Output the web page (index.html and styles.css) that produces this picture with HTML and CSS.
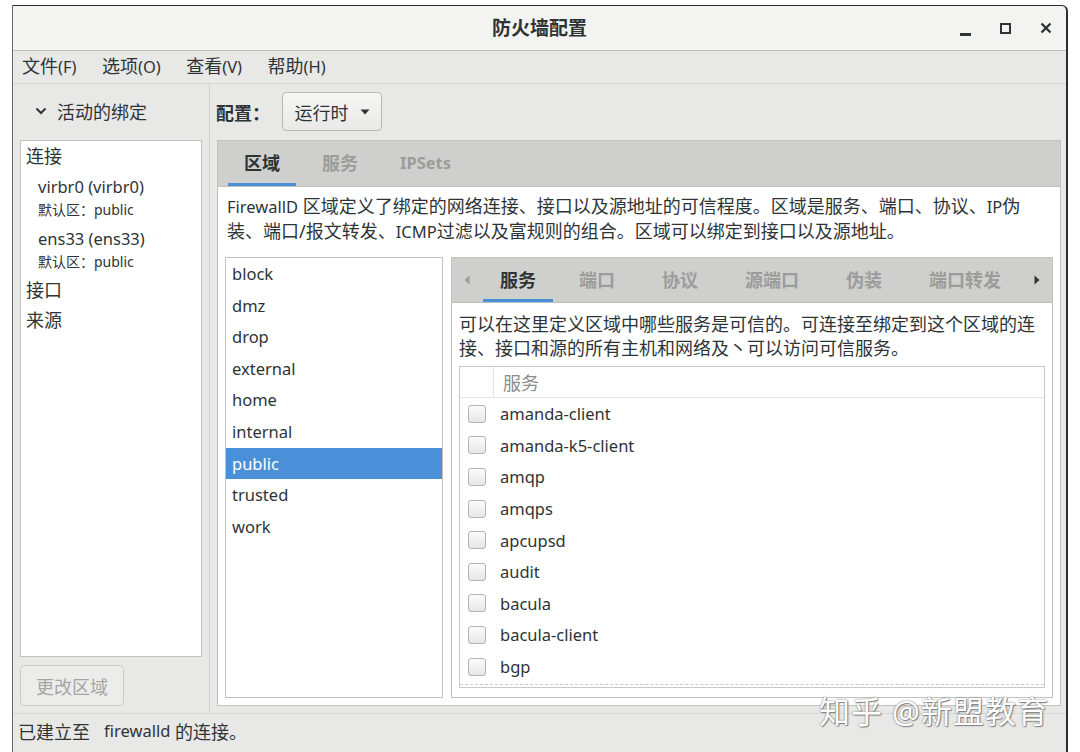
FILE: index.html
```html
<!DOCTYPE html>
<html lang="zh-CN">
<head>
    <meta charset="UTF-8">
    <title>防火墙配置</title>
    <link rel="stylesheet" href="styles.css">
</head>
<body>
    <div class="window">
        <div class="titlebar">
            <span class="title">防火墙配置</span>
            <div class="controls">
                <span class="ctl-min"></span>
                <span class="ctl-max"></span>
                <svg width="12" height="12" viewBox="0 0 12 12"><path d="M1.5 1.5 L10.5 10.5 M10.5 1.5 L1.5 10.5" stroke="#2e3436" stroke-width="2.4"/></svg>
            </div>
        </div>

        <div class="menubar">
            <span>文件<span class="en">(F)</span></span>
            <span>选项<span class="en">(O)</span></span>
            <span>查看<span class="en">(V)</span></span>
            <span>帮助<span class="en">(H)</span></span>
        </div>

        <div class="main">
            <div class="sidebar">
                <div class="side-head">
                    <svg width="12" height="8" viewBox="0 0 12 8"><path d="M1.5 1.5 L6 6 L10.5 1.5" fill="none" stroke="#2e3436" stroke-width="2"/></svg>
                    <span>活动的绑定</span>
                </div>
                <div class="bindings">
                    <div class="bind-group">连接</div>
                    <div class="bind-item">virbr0 (virbr0)</div>
                    <div class="bind-zone">默认区：public</div>
                    <div class="bind-item second">ens33 (ens33)</div>
                    <div class="bind-zone">默认区：public</div>
                    <div class="bind-group gap">接口</div>
                    <div class="bind-group">来源</div>
                </div>
                <div class="btn btn-disabled">更改区域</div>
            </div>

            <div class="content">
                <div class="config-row">
                    <span class="config-label">配置：</span>
                    <div class="btn combo">运行时
                        <svg width="10" height="6" viewBox="0 0 10 6"><path d="M0.5 0.5 L9.5 0.5 L5 5.5 Z" fill="#2e3436"/></svg>
                    </div>
                </div>

                <div class="notebook">
                    <div class="tabs">
                        <span class="tab active">区域</span>
                        <span class="tab">服务</span>
                        <span class="tab en-tab">IPSets</span>
                    </div>
                    <div class="page">
                        <p class="desc outer-desc"><span class="en">FirewallD</span> 区域定义了绑定的网络连接、接口以及源地址的可信程度。区域是服务、端口、协议、<span class="en">IP</span>伪<br>装、端口/报文转发、<span class="en">ICMP</span>过滤以及富规则的组合。区域可以绑定到接口以及源地址。</p>
                        <div class="zone-area">
                            <ul class="zones">
                                <li>block</li>
                                <li>dmz</li>
                                <li>drop</li>
                                <li>external</li>
                                <li>home</li>
                                <li>internal</li>
                                <li class="selected">public</li>
                                <li>trusted</li>
                                <li>work</li>
                            </ul>

                            <div class="inner-notebook">
                                <div class="inner-tabs">
                                    <svg class="arrow" width="6" height="10" viewBox="0 0 6 10"><path d="M5.5 0.5 L5.5 9.5 L0.5 5 Z" fill="#9a9a9a"/></svg>
                                    <span class="itab active">服务</span>
                                    <span class="itab">端口</span>
                                    <span class="itab">协议</span>
                                    <span class="itab">源端口</span>
                                    <span class="itab">伪装</span>
                                    <span class="itab">端口转发</span>
                                    <svg class="arrow arrow-r" width="6" height="10" viewBox="0 0 6 10"><path d="M0.5 0.5 L0.5 9.5 L5.5 5 Z" fill="#2e3436"/></svg>
                                </div>
                                <div class="inner-page">
                                    <p class="desc inner-desc">可以在这里定义区域中哪些服务是可信的。可连接至绑定到这个区域的连接、接口和源的所有主机和网络及丶可以访问可信服务。</p>
                                    <div class="tree">
                                        <div class="tree-head">
                                            <span class="col-check"></span>
                                            <span class="col-name">服务</span>
                                        </div>
                                        <div class="tree-body">
                                            <div class="row"><span class="check"></span>amanda-client</div>
                                            <div class="row"><span class="check"></span>amanda-k5-client</div>
                                            <div class="row"><span class="check"></span>amqp</div>
                                            <div class="row"><span class="check"></span>amqps</div>
                                            <div class="row"><span class="check"></span>apcupsd</div>
                                            <div class="row"><span class="check"></span>audit</div>
                                            <div class="row"><span class="check"></span>bacula</div>
                                            <div class="row"><span class="check"></span>bacula-client</div>
                                            <div class="row"><span class="check"></span>bgp</div>
                                        </div>
                                    </div>
                                </div>
                            </div>
                        </div>
                    </div>
                </div>
            </div>
        </div>

        <div class="statusbar">已建立至&nbsp;&nbsp; <span class="en">firewalld</span>&nbsp;的连接。</div>

        <div class="watermark">知乎 @新盟教育</div>
    </div>
</body>
</html>
```

FILE: styles.css
```css
body {
    margin: 0;
    background: #ffffff;
    font-family: "Noto Sans", "Noto Sans CJK SC", sans-serif;
    font-size: 18px;
    color: #2e3436;
    overflow: hidden;
}
.en {
    font-size: 16.5px;
}
.window {
    position: relative;
    margin: 5px 0 0 12px;
    width: 1056px;
    height: 760px;
    background: #e8e8e7;
    border-top: 1px solid #2b2b2b;
    border-left: 1px solid #6a6a6a;
    border-right: 2px solid #2b3036;
    border-top-right-radius: 6px;
    box-sizing: border-box;
}
.titlebar {
    height: 44px;
    background: #f3f3f2;
    border-bottom: 1px solid #bdbdbb;
    display: flex;
    align-items: center;
    justify-content: center;
    position: relative;
    border-top-right-radius: 6px;
}
.title {
    font-weight: bold;
    font-size: 19px;
    color: #2e3436;
    margin-top: -2px;
}
.controls {
    position: absolute;
    right: 14px;
    top: 0;
    height: 44px;
    display: flex;
    align-items: center;
    gap: 29px;
}
.ctl-min {
    width: 11px;
    height: 3px;
    background: #2e3436;
    margin-top: 12px;
}
.ctl-max {
    width: 7px;
    height: 7px;
    border: 2px solid #2e3436;
}
.menubar {
    height: 33px;
    border-bottom: 1px solid #d6d6d4;
    display: flex;
    align-items: center;
    padding-left: 9px;
    line-height: 24px;
    padding-bottom: 1px;
    box-sizing: border-box;
}
.menubar > span {
    margin-right: 25.5px;
}
.main {
    display: flex;
    height: 629px;
}
.sidebar {
    width: 197px;
    border-right: 1px solid #cfcfcd;
    display: flex;
    flex-direction: column;
    padding: 0 7px;
    box-sizing: border-box;
}
.side-head {
    height: 56px;
    display: flex;
    align-items: center;
    gap: 10px;
    padding-left: 15px;
    padding-bottom: 2px;
    box-sizing: border-box;
}
.bindings {
    height: 517px;
    background: #ffffff;
    border: 1px solid #c2c2c0;
    box-sizing: border-box;
    padding: 0 0 0 5px;
}
.bind-group {
    line-height: 30px;
}
.bind-group.gap {
    margin-top: 2px;
}
.bind-item {
    padding-left: 12px;
    line-height: 24px;
    margin-top: 4px;
    font-size: 16.5px;
}
.bind-item.second {
    margin-top: 6px;
}
.bind-zone {
    padding-left: 12px;
    font-size: 14px;
    line-height: 22px;
}
.btn {
    border: 1px solid #b8b8b5;
    border-radius: 4px;
    background: linear-gradient(#f6f6f5, #e9e9e8);
    display: flex;
    align-items: center;
    justify-content: center;
    box-sizing: border-box;
}
.btn-disabled {
    margin-top: 8px;
    width: 104px;
    height: 41px;
    color: #a5a5a3;
    background: #ececeb;
    border-color: #cbcbc9;
}
.content {
    flex: 1;
    display: flex;
    flex-direction: column;
    padding: 0 5px 0 7px;
}
.config-row {
    height: 56px;
    display: flex;
    align-items: center;
}
.config-label {
    font-weight: bold;
    width: 66px;
    margin-left: -1px;
}
.combo {
    width: 100px;
    height: 39px;
    gap: 11px;
    margin-bottom: 1px;
}
.notebook {
    height: 566px;
    border: 1px solid #c2c2c0;
    box-sizing: border-box;
    display: flex;
    flex-direction: column;
}
.tabs {
    flex-shrink: 0;
    height: 45px;
    background: #cfcfcd;
    display: flex;
    align-items: stretch;
    padding-left: 10px;
    border-bottom: 1px solid #c0c0be;
}
.tab {
    font-weight: bold;
    color: #9c9c9a;
    padding: 0 16px;
    margin-right: 10px;
    display: flex;
    align-items: center;
    border-bottom: 3px solid transparent;
}
.tab.en-tab {
    font-size: 16.5px;
}
.tab.active {
    color: #2e3436;
    border-bottom-color: #4a90d9;
}
.page {
    flex: 1;
    min-height: 0;
    background: #ffffff;
    padding: 7px 7px 7px 7px;
    display: flex;
    flex-direction: column;
}
.desc {
    margin: 0;
    line-height: 25px;
}
.outer-desc {
    padding: 0 10px 0 2px;
}
.zone-area {
    flex: 1;
    min-height: 0;
    display: flex;
    gap: 8px;
    margin-top: 13px;
}
.zones {
    list-style: none;
    margin: 0;
    padding: 0;
    width: 218px;
    border: 1px solid #c2c2c0;
    box-sizing: border-box;
    font-size: 16.5px;
}
.zones li {
    line-height: 31.6px;
    padding-left: 6px;
}
.zones li.selected {
    background: #4a90d9;
    color: #ffffff;
}
.inner-notebook {
    flex: 1;
    border: 1px solid #c2c2c0;
    display: flex;
    flex-direction: column;
}
.inner-tabs {
    flex-shrink: 0;
    height: 44px;
    background: #cfcfcd;
    display: flex;
    align-items: stretch;
    padding-left: 12px;
    border-bottom: 1px solid #c0c0be;
}
.arrow {
    align-self: center;
    margin-right: 13px;
}
.arrow-r {
    margin-left: auto;
    margin-right: 12px;
}
.itab {
    font-weight: bold;
    color: #9c9c9a;
    padding: 1px 17px 0;
    margin-right: 13px;
    display: flex;
    align-items: center;
    border-bottom: 3px solid transparent;
}
.itab.active {
    color: #2e3436;
    border-bottom-color: #4a90d9;
    margin-right: 9px;
}
.inner-page {
    flex: 1;
    min-height: 0;
    background: #ffffff;
    padding: 10px 7px 9px 7px;
    display: flex;
    flex-direction: column;
}
.inner-desc {
    line-height: 23.5px;
}
.tree {
    flex: 1;
    min-height: 0;
    overflow: hidden;
    margin-top: 6px;
    border: 1px solid #c8c8c6;
    display: flex;
    flex-direction: column;
}
.tree-head {
    flex-shrink: 0;
    height: 30px;
    display: flex;
    border-bottom: 1px solid #e4e4e2;
}
.col-check {
    width: 33px;
    border-right: 1px solid #e4e4e2;
}
.col-name {
    padding-left: 9px;
    color: #8c8c8a;
    display: flex;
    align-items: center;
    padding-bottom: 1px;
}
.tree-body {
    flex: 1;
    min-height: 0;
    overflow: hidden;
    border-bottom: 1px dashed #c8c8c6;
    margin-bottom: 2px;
    font-size: 16.5px;
}
.row {
    height: 31.6px;
    display: flex;
    align-items: center;
    padding-left: 8px;
}
.check {
    width: 16px;
    height: 16px;
    border: 1px solid #b3b3b1;
    border-radius: 3px;
    background: linear-gradient(#fbfbfb, #e6e6e5);
    margin-right: 14px;
}
.statusbar {
    border-top: 1px solid #d6d6d4;
    height: 37px;
    display: flex;
    align-items: center;
    padding-left: 5px;
    padding-bottom: 3px;
    box-sizing: border-box;
    white-space: pre;
}
.watermark {
    position: absolute;
    left: 806px;
    top: 681px;
    font-size: 31px;
    color: #ffffff;
    letter-spacing: 1px;
    text-shadow: 0 0 2px #6a6a6a, 1px 1px 1px #8a8a8a;
}
```
